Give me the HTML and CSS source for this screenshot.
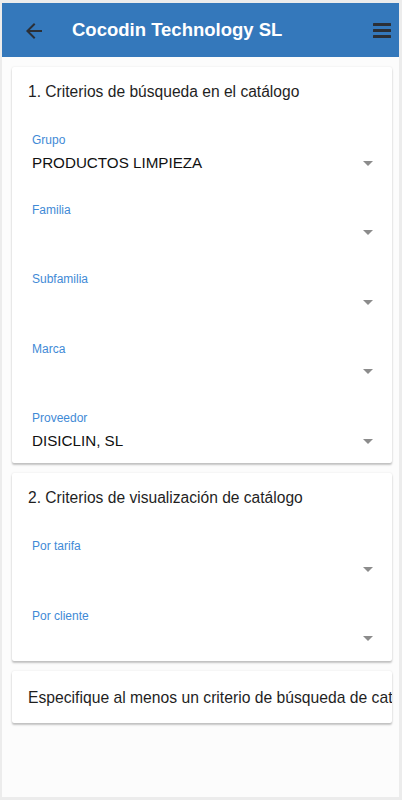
FILE: index.html
```html
<!DOCTYPE html>
<html lang="es">
<head>
<meta charset="utf-8">
<title>Cocodin Technology SL</title>
<link rel="stylesheet" href="styles.css">
</head>
<body>
<div class="app">
  <header class="toolbar">
    <button class="icon-btn back" aria-label="Atrás">
      <svg width="24" height="24" viewBox="0 0 24 24"><path d="M20 11H7.83l5.59-5.59L12 4l-8 8 8 8 1.41-1.41L7.83 13H20v-2z" fill="#2b2f36"/></svg>
    </button>
    <h1 class="title">Cocodin Technology SL</h1>
    <button class="icon-btn menu" aria-label="Menú">
      <svg width="18" height="15" viewBox="0 0 18 15"><rect x="0" y="0" width="18" height="3" rx="0.5" fill="#2b2f36"/><rect x="0" y="6" width="18" height="3" rx="0.5" fill="#2b2f36"/><rect x="0" y="12" width="18" height="3" rx="0.5" fill="#2b2f36"/></svg>
    </button>
  </header>

  <main class="content">
    <section class="card">
      <h2 class="card-title">1. Criterios de búsqueda en el catálogo</h2>
      <div class="fields">
        <div class="field">
          <span class="label">Grupo</span>
          <div class="select"><span class="value">PRODUCTOS LIMPIEZA</span><span class="caret"></span></div>
        </div>
        <div class="field">
          <span class="label">Familia</span>
          <div class="select"><span class="value"></span><span class="caret"></span></div>
        </div>
        <div class="field">
          <span class="label">Subfamilia</span>
          <div class="select"><span class="value"></span><span class="caret"></span></div>
        </div>
        <div class="field">
          <span class="label">Marca</span>
          <div class="select"><span class="value"></span><span class="caret"></span></div>
        </div>
        <div class="field">
          <span class="label">Proveedor</span>
          <div class="select"><span class="value">DISICLIN, SL</span><span class="caret"></span></div>
        </div>
      </div>
    </section>

    <section class="card">
      <h2 class="card-title">2. Criterios de visualización de catálogo</h2>
      <div class="fields">
        <div class="field">
          <span class="label">Por tarifa</span>
          <div class="select"><span class="value"></span><span class="caret"></span></div>
        </div>
        <div class="field">
          <span class="label">Por cliente</span>
          <div class="select"><span class="value"></span><span class="caret"></span></div>
        </div>
      </div>
    </section>

    <section class="card note">
      <p class="note-text">Especifique al menos un criterio de búsqueda de catálogo</p>
    </section>
  </main>
</div>
</body>
</html>
```

FILE: styles.css
```css
html, body {
  margin: 0;
  padding: 0;
}
body {
  background: #ececec;
  font-family: "Liberation Sans", Arial, Helvetica, sans-serif;
  color: #1f1f1f;
  width: 402px;
  height: 800px;
  overflow: hidden;
}
.app {
  margin: 3px 0 0 2px;
  width: 397px;
  height: 794px;
  background: #fcfcfc;
  display: flex;
  flex-direction: column;
}
.toolbar {
  height: 54px;
  background: #3478bb;
  display: flex;
  align-items: center;
  flex-shrink: 0;
}
.icon-btn {
  border: 0;
  background: none;
  padding: 0;
  display: flex;
  align-items: center;
  justify-content: center;
  cursor: pointer;
}
.back {
  margin-left: 20px;
  width: 24px;
  height: 24px;
  margin-top: 1px;
}
.title {
  margin: 0 0 0 26px;
  font-size: 18.5px;
  font-weight: bold;
  color: #ffffff;
  flex: 1;
  letter-spacing: 0;
}
.menu {
  width: 18px;
  height: 15px;
  margin-right: 8px;
  margin-top: 1px;
}
.content {
  padding: 10px 7px 0 10px;
  display: flex;
  flex-direction: column;
  gap: 10px;
}
.card {
  background: #ffffff;
  border-radius: 2px;
  box-shadow: 0 2px 2px rgba(0,0,0,0.22), 0 0 2px rgba(0,0,0,0.10);
  overflow: hidden;
}
.card-title {
  margin: 0;
  padding: 15px 16px 0 16px;
  font-size: 15.6px;
  font-weight: normal;
  line-height: 20px;
  color: #1f1f1f;
}
.fields {
  padding: 31px 16px 10px 20px;
  display: flex;
  flex-direction: column;
  gap: 27.5px;
}
.field {
  display: flex;
  flex-direction: column;
  gap: 4px;
}
.label {
  font-size: 12px;
  line-height: 14px;
  color: #3f8ad6;
}
.select {
  height: 24px;
  display: flex;
  align-items: center;
  justify-content: space-between;
}
.value {
  font-size: 15.2px;
  line-height: 20px;
  color: #111111;
}
.caret {
  width: 0;
  height: 0;
  border-left: 5px solid transparent;
  border-right: 5px solid transparent;
  border-top: 5px solid #8c8c8c;
  margin-right: 3px;
}
.note {
  padding: 17px 0 15px 16px;
}
.note-text {
  margin: 0;
  font-size: 15.7px;
  line-height: 20px;
  white-space: nowrap;
  color: #1f1f1f;
}
```
